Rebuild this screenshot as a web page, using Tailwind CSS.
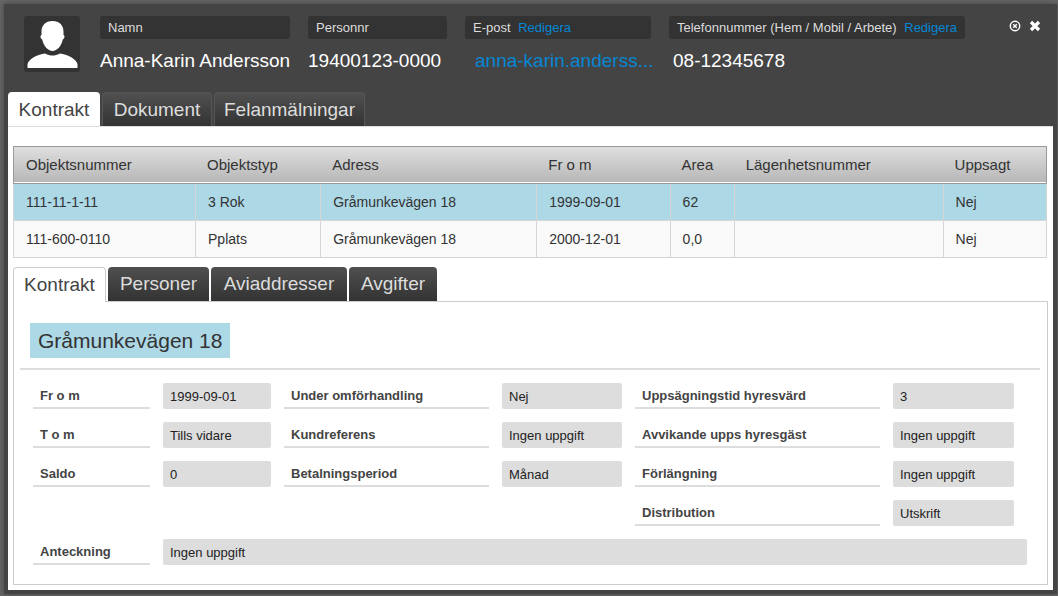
<!DOCTYPE html>
<html lang="sv">
<head>
<meta charset="utf-8">
<meta name="viewport" content="width=device-width, initial-scale=1">
<title>Anna-Karin Andersson</title>
<script src="https://cdn.jsdelivr.net/npm/@tailwindcss/browser@4"></script>
</head>
<body class="min-h-screen bg-[#666] pt-1 pl-1 pr-px pb-0.5 flex flex-col font-['Liberation_Sans',Arial,sans-serif] text-[#333]">
<main class="grow flex flex-col bg-[#444] px-1 pb-1 shadow-[0_0_6px_#444]">
  <header class="flex items-start pl-4 pr-3 pt-3 h-22">
    <svg class="size-14 shrink-0 rounded-[3px] bg-[#333]" viewBox="0 0 56 56" role="img" aria-label="Profilbild">
      <path fill="#fff" d="M28.500 5c7 0 11.200 4.500 11 11v3c1.500.3 1.300 3.500-.7 4.500C37.500 30 33 35 28.500 35S19.500 30 18.200 23.500c-2-1-2.200-4.200-.7-4.500v-3C17.300 9.500 21.500 5 28.500 5Z"/>
      <path fill="#fff" d="M3.500 52v-4C5 42.500 14 38.500 21 37.500c3 1.500 5 2 7.500 2s4.500-.5 7.500-2C43 38.500 52 42.500 53.500 48v4Z"/>
    </svg>
    <dl class="flex grow gap-[18px] pl-5 min-w-0">
      <div class="w-[190px]">
        <dt class="h-[23px] rounded-[3px] bg-[#333] px-2 text-[13px] leading-6 text-[#ddd]">Namn</dt>
        <dd class="mt-2 text-[19px] leading-7 text-white whitespace-nowrap">Anna-Karin Andersson</dd>
      </div>
      <div class="w-[139px]">
        <dt class="h-[23px] rounded-[3px] bg-[#333] px-2 text-[13px] leading-6 text-[#ddd]">Personnr</dt>
        <dd class="mt-2 text-[19px] leading-7 text-white whitespace-nowrap">19400123-0000</dd>
      </div>
      <div class="w-[186px]">
        <dt class="h-[23px] rounded-[3px] bg-[#333] px-2 text-[13px] leading-6 text-[#ddd]">E-post <a href="#" class="ml-1 text-[#0587d4]">Redigera</a></dt>
        <dd class="mt-2 pl-2.5 text-[19px] leading-7 whitespace-nowrap"><a href="#" class="text-[#0587d4]">anna-karin.anderss...</a></dd>
      </div>
      <div class="w-[296px]">
        <dt class="h-[23px] rounded-[3px] bg-[#333] px-2 text-[13px] leading-6 text-[#ddd] whitespace-nowrap">Telefonnummer (Hem / Mobil / Arbete) <a href="#" class="ml-1 text-[#0587d4]">Redigera</a></dt>
        <dd class="mt-2 pl-1 text-[19px] leading-7 text-white whitespace-nowrap">08-12345678</dd>
      </div>
    </dl>
    <div class="flex gap-2 pt-1 text-white shrink-0">
      <button type="button" aria-label="Minimera" class="size-3">
        <svg class="size-3" viewBox="0 0 12 12" fill="none" stroke="currentColor"><circle cx="6" cy="6" r="4.700" stroke-width="1.500"/><path d="M4.200 4.200l3.600 3.600M7.800 4.200L4.200 7.800" stroke-width="1.500"/></svg>
      </button>
      <button type="button" aria-label="Stäng" class="size-3">
        <svg class="size-3" viewBox="0 0 12 12" stroke="currentColor" stroke-width="3.200"><path d="M2 2l8 8M10 2l-8 8"/></svg>
      </button>
    </div>
  </header>

  <nav class="flex gap-0.5 text-[19px] leading-[34px]">
    <button type="button" class="h-[35px] w-[92px] rounded-t bg-white text-[#444]">Kontrakt</button>
    <button type="button" class="h-[34px] w-[110px] rounded-t border border-b-0 border-[#555] bg-linear-to-b from-[#505050] to-[#333] text-[#ddd]">Dokument</button>
    <button type="button" class="h-[34px] w-[151px] rounded-t border border-b-0 border-[#555] bg-linear-to-b from-[#505050] to-[#333] text-[#ddd]">Felanmälningar</button>
  </nav>

  <section class="grow flex flex-col bg-white -mt-px border-t border-[#ddd] pl-[5px] pr-1.5 pt-[19px] pb-[5px]">
    <table class="w-full table-fixed border-separate border-spacing-0 text-left text-sm">
      <colgroup>
        <col class="w-[17.700%]"><col class="w-[12.100%]"><col class="w-[20.900%]"><col class="w-[12.900%]"><col class="w-[6.200%]"><col class="w-[20.200%]"><col>
      </colgroup>
      <thead>
        <tr class="h-[38px] bg-linear-to-b from-[#e0e0e0] to-[#b5b5b5] text-[15px] shadow-[inset_0_-2px_0_white]">
          <th scope="col" class="border-y border-l border-[#999] pl-3 font-normal">Objektsnummer</th>
          <th scope="col" class="border-y border-[#999] pl-[11px] font-normal">Objektstyp</th>
          <th scope="col" class="border-y border-[#999] pl-[11px] font-normal">Adress</th>
          <th scope="col" class="border-y border-[#999] pl-[11px] font-normal">Fr o m</th>
          <th scope="col" class="border-y border-[#999] pl-[11px] font-normal">Area</th>
          <th scope="col" class="border-y border-[#999] pl-[11px] font-normal">Lägenhetsnummer</th>
          <th scope="col" class="border-y border-r border-[#999] pl-[11px] font-normal">Uppsagt</th>
        </tr>
      </thead>
      <tbody>
        <tr class="h-[37px] bg-[#add8e6]">
          <td class="border-b border-x border-[#d5d5d5] pl-3">111-11-1-11</td>
          <td class="border-b border-r border-[#d5d5d5] pl-3">3 Rok</td>
          <td class="border-b border-r border-[#d5d5d5] pl-3">Gråmunkevägen 18</td>
          <td class="border-b border-r border-[#d5d5d5] pl-3">1999-09-01</td>
          <td class="border-b border-r border-[#d5d5d5] pl-3">62</td>
          <td class="border-b border-r border-[#d5d5d5] pl-3"></td>
          <td class="border-b border-r border-[#d5d5d5] pl-3">Nej</td>
        </tr>
        <tr class="h-[37px] bg-[#f9f9f9]">
          <td class="border-b border-x border-[#d5d5d5] pl-3">111-600-0110</td>
          <td class="border-b border-r border-[#d5d5d5] pl-3">Pplats</td>
          <td class="border-b border-r border-[#d5d5d5] pl-3">Gråmunkevägen 18</td>
          <td class="border-b border-r border-[#d5d5d5] pl-3">2000-12-01</td>
          <td class="border-b border-r border-[#d5d5d5] pl-3">0,0</td>
          <td class="border-b border-r border-[#d5d5d5] pl-3"></td>
          <td class="border-b border-r border-[#d5d5d5] pl-3">Nej</td>
        </tr>
      </tbody>
    </table>

    <nav class="z-10 mt-[9px] -mb-px flex gap-0.5 text-[19px] leading-[34px]">
      <button type="button" class="h-[35px] w-[93px] rounded-t border border-b-0 border-[#ccc] bg-white text-[#444]">Kontrakt</button>
      <button type="button" class="h-[34px] w-[101px] rounded-t bg-linear-to-b from-[#505050] to-[#333] text-[#ddd]">Personer</button>
      <button type="button" class="h-[34px] w-[136px] rounded-t bg-linear-to-b from-[#505050] to-[#333] text-[#ddd]">Aviaddresser</button>
      <button type="button" class="h-[34px] w-[88px] rounded-t bg-linear-to-b from-[#505050] to-[#333] text-[#ddd]">Avgifter</button>
    </nav>

    <article class="grow border border-[#ccc] -mr-px pl-1.5 pr-[7px] pt-[21px]">
      <div class="border-b-2 border-[#ddd] pl-2.5 pb-2.5 flex">
        <h1 class="bg-[#add8e6] px-2 text-[21px] leading-[35px]">Gråmunkevägen 18</h1>
      </div>
      <dl class="mt-[13px] mx-[13px] grid grid-cols-[117fr_108fr_205fr_120fr_245fr_121fr_0fr] auto-rows-[26px] gap-[13px] text-[13px] leading-[26px] whitespace-nowrap">
        <dt class="border-b-2 border-[#ddd] px-[7px] font-bold text-[#444]">Fr o m</dt>
        <dd class="rounded-xs bg-[#ddd] px-[7px] leading-7 text-[#222]">1999-09-01</dd>
        <dt class="border-b-2 border-[#ddd] px-[7px] font-bold text-[#444]">Under omförhandling</dt>
        <dd class="rounded-xs bg-[#ddd] px-[7px] leading-7 text-[#222]">Nej</dd>
        <dt class="border-b-2 border-[#ddd] px-[7px] font-bold text-[#444]">Uppsägningstid hyresvärd</dt>
        <dd class="rounded-xs bg-[#ddd] px-[7px] leading-7 text-[#222]">3</dd>

        <dt class="col-start-1 border-b-2 border-[#ddd] px-[7px] font-bold text-[#444]">T o m</dt>
        <dd class="rounded-xs bg-[#ddd] px-[7px] leading-7 text-[#222]">Tills vidare</dd>
        <dt class="border-b-2 border-[#ddd] px-[7px] font-bold text-[#444]">Kundreferens</dt>
        <dd class="rounded-xs bg-[#ddd] px-[7px] leading-7 text-[#222]">Ingen uppgift</dd>
        <dt class="border-b-2 border-[#ddd] px-[7px] font-bold text-[#444]">Avvikande upps hyresgäst</dt>
        <dd class="rounded-xs bg-[#ddd] px-[7px] leading-7 text-[#222]">Ingen uppgift</dd>

        <dt class="col-start-1 border-b-2 border-[#ddd] px-[7px] font-bold text-[#444]">Saldo</dt>
        <dd class="rounded-xs bg-[#ddd] px-[7px] leading-7 text-[#222]">0</dd>
        <dt class="border-b-2 border-[#ddd] px-[7px] font-bold text-[#444]">Betalningsperiod</dt>
        <dd class="rounded-xs bg-[#ddd] px-[7px] leading-7 text-[#222]">Månad</dd>
        <dt class="border-b-2 border-[#ddd] px-[7px] font-bold text-[#444]">Förlängning</dt>
        <dd class="rounded-xs bg-[#ddd] px-[7px] leading-7 text-[#222]">Ingen uppgift</dd>

        <dt class="col-start-5 border-b-2 border-[#ddd] px-[7px] font-bold text-[#444]">Distribution</dt>
        <dd class="rounded-xs bg-[#ddd] px-[7px] leading-7 text-[#222]">Utskrift</dd>

        <dt class="col-start-1 border-b-2 border-[#ddd] px-[7px] font-bold text-[#444]">Anteckning</dt>
        <dd class="col-span-6 rounded-xs bg-[#ddd] px-[7px] leading-7 text-[#222]">Ingen uppgift</dd>
      </dl>
    </article>
  </section>
</main>
</body>
</html>
